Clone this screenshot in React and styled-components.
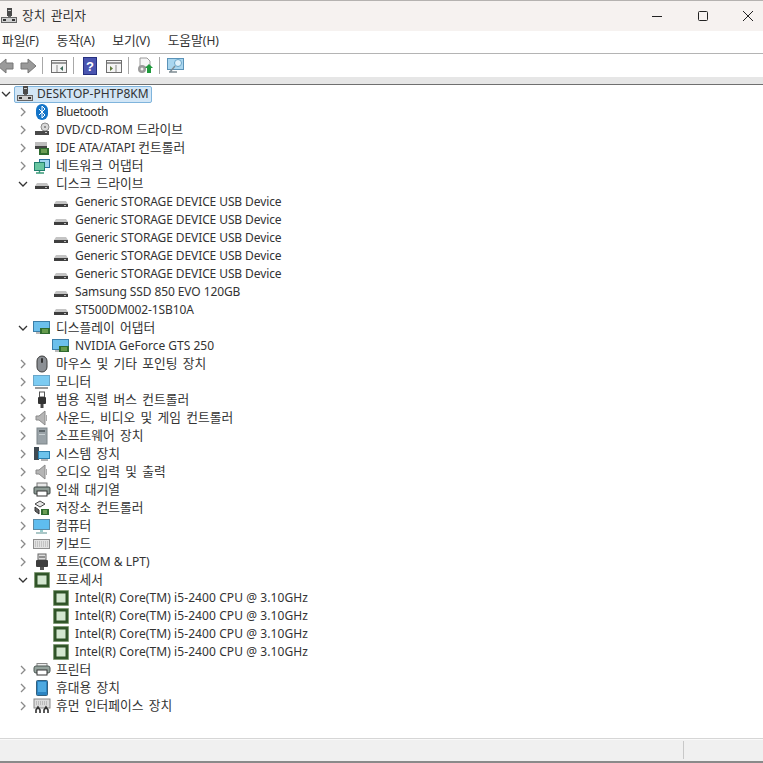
import React from "react";
import styled, { createGlobalStyle } from "styled-components";

const GlobalStyle = createGlobalStyle`
  html, body {
    margin: 0;
    padding: 0;
    background: #fff;
  }
  body {
    font-family: "Noto Sans", "Noto Sans CJK KR", sans-serif;
    font-size: 12px;
    color: #222;
    overflow: hidden;
  }
`;

const Window = styled.div`
  width: 763px;
  height: 763px;
  display: flex;
  flex-direction: column;
  background: #fff;
  border-top: 1px solid #b5b2b0;
  box-sizing: border-box;
  overflow: hidden;
`;

const TitleBar = styled.div`
  height: 30px;
  flex: none;
  display: flex;
  align-items: center;
  background: #f6f2f0;
  padding-bottom: 1px;
  box-sizing: border-box;
`;

const TitleText = styled.span`
  margin-left: 4px;
  font-size: 12px;
  line-height: 16px;
  color: #333;
`;

const WindowButtons = styled.div`
  margin-left: auto;
  margin-right: -8px;
  display: flex;
  align-items: center;
`;

const WindowButton = styled.div`
  width: 45.5px;
  height: 30px;
  display: flex;
  align-items: center;
  justify-content: center;
`;

const MenuBar = styled.div`
  flex: none;
  display: flex;
  align-items: center;
  gap: 17.5px;
  padding-left: 2px;
  padding-bottom: 2px;
  height: 20px;
  border-bottom: 1px solid #b4b4b4;
`;

const MenuItem = styled.span`
  font-size: 12px;
  line-height: 16px;
  color: #333;
`;

const Hangul = styled.span`
  font-size: 12.75px;
  line-height: 10px;
  word-spacing: 2px;
`;

const Toolbar = styled.div`
  height: 23px;
  flex: none;
  display: flex;
  align-items: center;
  box-sizing: border-box;
`;

const ToolIcon = styled.span`
  display: flex;
  margin-left: ${(p) => p.$gap || 0}px;
`;

const ToolSep = styled.span`
  width: 1px;
  height: 17px;
  background: #a8a8a8;
  margin-left: ${(p) => p.$gap || 0}px;
`;

const ToolbarEdge = styled.div`
  height: 7px;
  flex: none;
  background: #e6e6e6;
  border-bottom: 1px solid #6f6f6f;
`;

const Tree = styled.div`
  flex: 1;
  display: flex;
  flex-direction: column;
`;

const Row = styled.div`
  height: 18px;
  flex: none;
  display: flex;
  align-items: center;
  padding-left: ${(p) => (p.$level === 1 ? 17 : p.$level === 2 ? 37 : 0)}px;
`;

const Arrow = styled.span`
  width: 12px;
  height: 18px;
  flex: none;
  display: flex;
  align-items: center;
  justify-content: center;
`;

const IconSlot = styled.span`
  width: 18px;
  height: 18px;
  flex: none;
  display: flex;
  align-items: center;
  justify-content: center;
  margin-left: ${(p) => (p.$leaf ? 15 : 4)}px;
  margin-right: 1px;
`;

const Label = styled.span`
  font-size: 12px;
  line-height: 16px;
  white-space: nowrap;
  color: #333;
  margin-left: ${(p) => (p.$root ? 0 : 4)}px;
  letter-spacing: ${(p) => p.$track || 0}px;
`;

const SelectedLabel = styled.div`
  display: flex;
  align-items: center;
  height: 15px;
  margin-left: 2px;
  padding: 0 2px 0 1px;
  background: #d2e6f6;
  border: 1px solid #7fb4dc;
  border-radius: 2px;
`;

const RootIcon = styled.span`
  width: 18px;
  height: 16px;
  margin-right: 3px;
  display: flex;
  align-items: center;
  justify-content: center;
`;

const StatusBar = styled.div`
  height: 22px;
  flex: none;
  display: flex;
  background: #f0f0f0;
  border-top: 1px solid #d6d6d6;
  box-shadow: inset 0 1px 0 #fafafa;
  border-bottom: 2px solid #8a8a8a;
`;

const StatusCell = styled.div`
  width: 683px;
  margin: 2px 0;
  border-right: 1px solid #c8c8c8;
`;

// hangul runs are set a little larger, like the system font in the screenshot
const Mixed = ({ text }) =>
  text.split(/([\uAC00-\uD7A3,]+(?: [\uAC00-\uD7A3,]+)*)/).map((part, i) =>
    i % 2 ? <Hangul key={i}>{part}</Hangul> : part
  );

const Svg = ({ w = 16, h = 16, children }) => (
  <svg width={w} height={h} viewBox={`0 0 ${w} ${h}`} fill="none">
    {children}
  </svg>
);

const Chevron = ({ open }) => (
  <svg width="10" height="10" viewBox="0 0 10 10" fill="none" stroke={open ? "#333" : "#8a8a8a"} strokeWidth="1.3">
    {open ? <path d="M1 3l4 4 4-4" /> : <path d="M3 1l4 4-4 4" />}
  </svg>
);

const Computer = () => (
  <Svg w={18} h={18}>
    <rect x="7" y="1" width="5" height="8" fill="#4a4a4a" />
    <rect x="8" y="3" width="3" height="1" fill="#ccc" />
    <rect x="1.5" y="10.5" width="15" height="5" fill="#cfcfcf" stroke="#666" />
    <rect x="3" y="12" width="3" height="2" fill="#333" />
    <rect x="12" y="12" width="3" height="2" fill="#333" />
    <rect x="8" y="9" width="3" height="2" fill="#666" />
  </Svg>
);

const Bluetooth = () => (
  <Svg w={14} h={16}>
    <rect x="1" y="0" width="12" height="16" rx="6" fill="#1374c8" />
    <path d="M4 5l6 6-3 3V2l3 3-6 6" stroke="#fff" strokeWidth="1" />
  </Svg>
);

const Drive = () => (
  <Svg w={16} h={16}>
    <path d="M3 7h10l2 3v3H1v-3z" fill="#c4c4c4" />
    <rect x="1" y="10" width="14" height="3" fill="#3f3f3f" />
    <rect x="11" y="11" width="2" height="1" fill="#bbb" />
  </Svg>
);

const Dvd = () => (
  <Svg w={16} h={16}>
    <circle cx="11" cy="5" r="4" fill="#d9d9d9" stroke="#8c8c8c" />
    <circle cx="11" cy="5" r="1" fill="#777" />
    <rect x="1" y="9" width="14" height="4" fill="#4a4a4a" />
    <rect x="11" y="10" width="2" height="1" fill="#ccc" />
  </Svg>
);

const Ide = () => (
  <Svg w={16} h={16}>
    <rect x="1" y="2" width="12" height="4" fill="#bdbdbd" />
    <rect x="1" y="6" width="12" height="3" fill="#444" />
    <rect x="5" y="8" width="10" height="7" fill="#2f6b2f" />
    <path d="M7 10h6M7 12h6" stroke="#a8d07a" />
  </Svg>
);

const Network = () => (
  <Svg w={16} h={16}>
    <rect x="5.5" y="1.5" width="10" height="8" fill="#9fd4ef" stroke="#2a6f9e" />
    <rect x="0.5" y="4.5" width="10" height="8" fill="#68c5a0" stroke="#1f7e6c" />
    <path d="M2 15h8M5.5 13v2" stroke="#3a9a78" strokeWidth="1.4" />
  </Svg>
);

const Display = () => (
  <Svg w={18} h={16}>
    <rect x="0.5" y="1.5" width="16" height="10" fill="#6cc0ec" stroke="#3b7ea8" />
    <rect x="7" y="8" width="10" height="6" fill="#2f6b2f" />
    <path d="M9 10h6M9 12h6" stroke="#9ccb6a" />
    <path d="M3 13h4" stroke="#777" />
  </Svg>
);

const Mouse = () => (
  <Svg w={12} h={18}>
    <rect x="1" y="1" width="10" height="16" rx="5" fill="#8b8f94" stroke="#3c3c3c" />
    <rect x="5" y="3" width="2" height="5" rx="1" fill="#333" />
  </Svg>
);

const Monitor = () => (
  <Svg w={18} h={16}>
    <rect x="0.5" y="1.5" width="16" height="10" fill="#7ccbf2" stroke="#6aa6c8" />
    <path d="M2 14h13" stroke="#9a9a9a" strokeWidth="2" />
  </Svg>
);

const Usb = () => (
  <Svg w={10} h={18}>
    <rect x="2.5" y="1" width="5" height="5" fill="#fff" stroke="#555" />
    <rect x="1" y="6" width="8" height="7" rx="1" fill="#333" />
    <rect x="3.5" y="13" width="3" height="4" fill="#444" />
  </Svg>
);

const Speaker = () => (
  <Svg w={14} h={16}>
    <path d="M1 6h3l6-5v14l-6-5H1z" fill="#b5b5b5" stroke="#8a8a8a" />
    <path d="M11.5 5v6" stroke="#aaa" />
  </Svg>
);

const Software = () => (
  <Svg w={12} h={18}>
    <rect x="1" y="1" width="10" height="16" fill="#9aa3a8" stroke="#7d8589" />
    <rect x="3" y="3" width="6" height="2" fill="#5f686c" />
    <rect x="3" y="7" width="6" height="1" fill="#c9d0d3" />
  </Svg>
);

const SystemDevice = () => (
  <Svg w={18} h={16}>
    <rect x="1" y="1" width="5" height="13" fill="#3f4a52" />
    <rect x="5.5" y="5.5" width="11" height="7" fill="#6cc3ec" stroke="#2a7fad" />
    <path d="M8 14h7" stroke="#666" />
  </Svg>
);

const PrintQueue = () => (
  <Svg w={18} h={16}>
    <rect x="4" y="1" width="10" height="5" fill="#e8e8e8" stroke="#777" />
    <rect x="1" y="5" width="16" height="7" rx="1" fill="#8d9a94" stroke="#3d4744" />
    <rect x="4" y="9" width="10" height="5" fill="#fff" stroke="#333" />
  </Svg>
);

const Storage = () => (
  <Svg w={16} h={16}>
    <path d="M6 1l5 3-5 3-5-3z" fill="#e4e4e4" stroke="#444" />
    <path d="M1 7l4 3v4L1 11z" fill="#666" stroke="#333" />
    <rect x="7" y="9" width="8" height="6" fill="#2f6b2f" />
    <path d="M9 11h4M9 13h4" stroke="#a8d07a" />
  </Svg>
);

const Pc = () => (
  <Svg w={18} h={17}>
    <rect x="0.5" y="1.5" width="16" height="10" fill="#5fbdef" stroke="#5a8aa5" />
    <path d="M7 12h3v2H7z" fill="#9cc" />
    <path d="M3 15h11" stroke="#8fb5b5" strokeWidth="1.5" />
  </Svg>
);

const Keyboard = () => (
  <Svg w={18} h={12}>
    <rect x="0.5" y="1.5" width="16" height="9" fill="#e2e2e2" stroke="#8e8e8e" />
    <path d="M2 4h13M2 6h13M2 8h13" stroke="#a6a6a6" strokeDasharray="1 1" />
  </Svg>
);

const Port = () => (
  <Svg w={14} h={18}>
    <rect x="3" y="1" width="8" height="6" fill="#ddd" stroke="#666" />
    <path d="M5 3v2M7 3v2M9 3v2" stroke="#444" />
    <rect x="1" y="7" width="12" height="7" rx="1" fill="#3d3d3d" />
    <rect x="5" y="14" width="4" height="3" fill="#555" />
  </Svg>
);

const Cpu = () => (
  <Svg w={16} h={16}>
    <rect x="0.5" y="0.5" width="15" height="15" fill="#375f2e" stroke="#6f8a5f" strokeDasharray="1 1" />
    <rect x="1.5" y="1.5" width="13" height="13" fill="#2f5227" />
    <rect x="3.5" y="3.5" width="9" height="9" fill="#d3e6cf" />
  </Svg>
);

const Printer = () => (
  <Svg w={18} h={14}>
    <rect x="4" y="0.5" width="10" height="3" fill="#eee" stroke="#888" />
    <rect x="1" y="3" width="16" height="7" rx="2" fill="#95a39d" stroke="#4d5855" />
    <rect x="4" y="7" width="10" height="5" fill="#fff" stroke="#333" />
  </Svg>
);

const Portable = () => (
  <Svg w={12} h={16}>
    <rect x="0.5" y="0.5" width="11" height="15" rx="1" fill="#2b84c2" stroke="#33607e" />
    <rect x="2" y="2" width="8" height="10" fill="#4ea9e0" />
  </Svg>
);

const Hid = () => (
  <Svg w={18} h={16}>
    <rect x="1" y="1" width="16" height="9" fill="#dcdcdc" stroke="#8a8a8a" />
    <path d="M3 4h12M3 6h12" stroke="#999" strokeDasharray="1 1" />
    <path d="M3 15v-3l2-3 2 3v3M11 15v-3l2-3 2 3v3" stroke="#333" strokeWidth="1.6" />
  </Svg>
);

const rows = [
  { label: "Bluetooth", Icon: Bluetooth, track: -0.4 },
  { label: "DVD/CD-ROM 드라이브", Icon: Dvd },
  { label: "IDE ATA/ATAPI 컨트롤러", Icon: Ide },
  { label: "네트워크 어댑터", Icon: Network },
  {
    label: "디스크 드라이브",
    Icon: Drive,
    itemTrack: -0.1,
    items: [
      "Generic STORAGE DEVICE USB Device",
      "Generic STORAGE DEVICE USB Device",
      "Generic STORAGE DEVICE USB Device",
      "Generic STORAGE DEVICE USB Device",
      "Generic STORAGE DEVICE USB Device",
      "Samsung SSD 850 EVO 120GB",
      "ST500DM002-1SB10A",
    ],
  },
  { label: "디스플레이 어댑터", Icon: Display, items: ["NVIDIA GeForce GTS 250"] },
  { label: "마우스 및 기타 포인팅 장치", Icon: Mouse },
  { label: "모니터", Icon: Monitor },
  { label: "범용 직렬 버스 컨트롤러", Icon: Usb },
  { label: "사운드, 비디오 및 게임 컨트롤러", Icon: Speaker },
  { label: "소프트웨어 장치", Icon: Software },
  { label: "시스템 장치", Icon: SystemDevice },
  { label: "오디오 입력 및 출력", Icon: Speaker },
  { label: "인쇄 대기열", Icon: PrintQueue },
  { label: "저장소 컨트롤러", Icon: Storage },
  { label: "컴퓨터", Icon: Pc },
  { label: "키보드", Icon: Keyboard },
  { label: "포트(COM & LPT)", Icon: Port },
  {
    label: "프로세서",
    Icon: Cpu,
    itemTrack: 0.08,
    items: [
      "Intel(R) Core(TM) i5-2400 CPU @ 3.10GHz",
      "Intel(R) Core(TM) i5-2400 CPU @ 3.10GHz",
      "Intel(R) Core(TM) i5-2400 CPU @ 3.10GHz",
      "Intel(R) Core(TM) i5-2400 CPU @ 3.10GHz",
    ],
  },
  { label: "프린터", Icon: Printer },
  { label: "휴대용 장치", Icon: Portable },
  { label: "휴먼 인터페이스 장치", Icon: Hid },
];

const ArrowTool = ({ flip }) => (
  <svg width="17" height="16" viewBox="0 0 17 16" style={flip ? { transform: "scaleX(-1)" } : undefined}>
    <path d="M1 5h7V1l8 7-8 7v-4H1z" fill="#9a9a9a" stroke="#777" />
  </svg>
);

const PaneTool = ({ dark }) => (
  <Svg w={17} h={14}>
    <rect x="0.5" y="1.5" width="15" height="12" fill="#f4f4f4" stroke="#6f6f6f" />
    <path d="M1 4h14" stroke="#999" strokeWidth="2" />
    <path d={dark ? "M10 6v7" : "M6 6v7"} stroke="#888" />
    <path d={dark ? "M4 7l3 2.5L4 12z" : "M12 7L9 9.5l3 2.5z"} fill={dark ? "#5d7a3a" : "#3f6a5a"} />
  </Svg>
);

const HelpTool = () => (
  <Svg w={14} h={18}>
    <rect x="0.5" y="0.5" width="13" height="17" fill="#4a55b0" stroke="#252f80" />
    <text x="7" y="14" textAnchor="middle" fontSize="13" fontWeight="700" fill="#fff" fontFamily="Liberation Sans">?</text>
  </Svg>
);

const UpdateTool = () => (
  <Svg w={18} h={18}>
    <path d="M4 1h7l3 3v6H4z" fill="#f5f5f5" stroke="#9a9a9a" />
    <circle cx="6" cy="12" r="4" fill="#9a9a9a" />
    <circle cx="6" cy="12" r="1.5" fill="#eee" />
    <path d="M13 7l4 4h-2v5h-4v-5H9z" fill="#1f9a3c" />
  </Svg>
);

const ScanTool = () => (
  <Svg w={18} h={18}>
    <rect x="0.5" y="1.5" width="16" height="11" fill="#a9d6ef" stroke="#5b93b8" />
    <circle cx="11" cy="6" r="3.5" fill="#dff1fb" stroke="#6aa6c8" />
    <path d="M8 9l-5 6M2 15h8" stroke="#7f8c93" strokeWidth="1.4" />
  </Svg>
);

export default function App() {
  return (
    <>
      <GlobalStyle />
      <Window>
        <TitleBar>
          <Computer />
          <TitleText><Mixed text="장치 관리자" /></TitleText>
          <WindowButtons>
            <WindowButton>
              <svg width="12" height="12" viewBox="0 0 12 12"><path d="M1 6.5h10" stroke="#222" /></svg>
            </WindowButton>
            <WindowButton>
              <svg width="12" height="12" viewBox="0 0 12 12"><rect x="1.5" y="1.5" width="9" height="9" rx="1" fill="none" stroke="#222" /></svg>
            </WindowButton>
            <WindowButton>
              <svg width="12" height="12" viewBox="0 0 12 12"><path d="M1 1l10 10M11 1L1 11" stroke="#222" /></svg>
            </WindowButton>
          </WindowButtons>
        </TitleBar>
        <MenuBar>
          <MenuItem><Mixed text="파일(F)" /></MenuItem>
          <MenuItem><Mixed text="동작(A)" /></MenuItem>
          <MenuItem><Mixed text="보기(V)" /></MenuItem>
          <MenuItem><Mixed text="도움말(H)" /></MenuItem>
        </MenuBar>
        <Toolbar>
          <ToolIcon $gap={-3}><ArrowTool flip /></ToolIcon>
          <ToolIcon $gap={6}><ArrowTool /></ToolIcon>
          <ToolSep $gap={5} />
          <ToolIcon $gap={8}><PaneTool /></ToolIcon>
          <ToolSep $gap={5} />
          <ToolIcon $gap={9}><HelpTool /></ToolIcon>
          <ToolIcon $gap={9}><PaneTool dark /></ToolIcon>
          <ToolSep $gap={5} />
          <ToolIcon $gap={7}><UpdateTool /></ToolIcon>
          <ToolSep $gap={5} />
          <ToolIcon $gap={7}><ScanTool /></ToolIcon>
        </Toolbar>
        <ToolbarEdge />
        <Tree>
          <Row>
            <Arrow><Chevron open /></Arrow>
            <SelectedLabel>
              <RootIcon><Computer /></RootIcon>
              <Label $root>DESKTOP-PHTP8KM</Label>
            </SelectedLabel>
          </Row>
          {rows.map((row) => (
            <React.Fragment key={row.label}>
              <Row $level={1}>
                <Arrow><Chevron open={!!row.items} /></Arrow>
                <IconSlot><row.Icon /></IconSlot>
                <Label $track={row.track}><Mixed text={row.label} /></Label>
              </Row>
              {(row.items || []).map((item, i) => (
                <Row $level={2} key={i}>
                  <IconSlot $leaf><row.Icon /></IconSlot>
                  <Label $track={row.itemTrack}>{item}</Label>
                </Row>
              ))}
            </React.Fragment>
          ))}
        </Tree>
        <StatusBar>
          <StatusCell />
        </StatusBar>
      </Window>
    </>
  );
}
